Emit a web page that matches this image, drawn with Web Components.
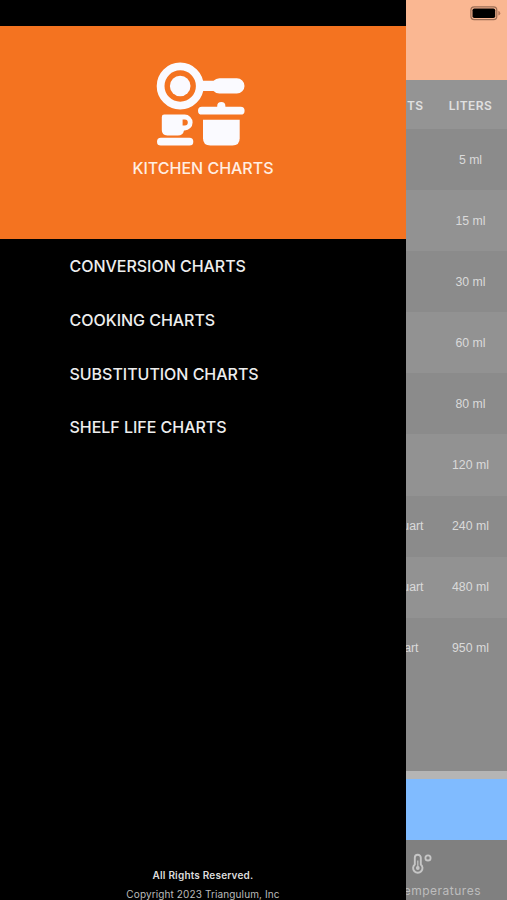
<!DOCTYPE html>
<html lang="en">
<head>
<meta charset="utf-8">
<title>Kitchen Charts</title>
<style>
html,body{margin:0;padding:0;background:#000}
</style>
</head>
<body>
<kitchen-app></kitchen-app>
<script>
const define = (name, html) => customElements.define(name, class extends HTMLElement {
  constructor() {
    super();
    this.attachShadow({ mode: 'open' }).innerHTML = html;
  }
});

define('kitchen-logo', `
<style>:host{display:block;width:90px;height:85px}svg{display:block}</style>
<svg width="90" height="85" viewBox="0 0 90 85" fill="#fafaff">
  <circle cx="24.2" cy="24" r="19.6" fill="none" stroke="#fafaff" stroke-width="7.8"/>
  <circle cx="24.2" cy="24" r="10.3"/>
  <path d="M46 18.700h11.500q2.500-2.500 6-2.500h17.300a7.700 7.700 0 0 1 0 15.400h-17.300q-3.500 0-6-2.500h-11.500z"/>
  <path d="M45.900 44.800h15.300v-.6a4.100 4.100 0 0 1 8.200 0v.6h15.300a3.900 3.900 0 0 1 0 7.800h-38.800a3.900 3.900 0 0 1 0-7.800z"/>
  <path d="M47 57.700h36.700v18.500q0 7.300-7.300 7.300h-22q-7.400 0-7.400-7.300z"/>
  <path fill-rule="evenodd" d="M8.200 52.600h20.500a7.900 7.900 0 0 1 0 15.800h-.7q-.9 5-6.200 5h-10.600q-5.400 0-5.400-5.400v-13q0-2.400 2.400-2.400zM26.600 57.500v6h2.200a3 3 0 0 0 0-6z"/>
  <rect x="1" y="75.800" width="36.300" height="7.700" rx="3.850"/>
</svg>`);

define('drawer-header', `
<style>
:host{display:flex;flex-direction:column;align-items:center;box-sizing:border-box;height:213.500px;margin-top:25.500px;padding-top:36px;background:#f47320}
kitchen-logo{margin-right:4.500px}
h1{margin:11.500px 0 0;font:500 16px/20px Inter,sans-serif;letter-spacing:-.01px;color:#ffeee2;white-space:nowrap}
</style>
<kitchen-logo></kitchen-logo><h1><slot></slot></h1>`);

define('menu-item', `
<style>:host{display:flex;align-items:center;height:53.700px;padding-left:69.500px;font:500 16px/20px Inter,sans-serif;letter-spacing:-.03px;color:#eee;white-space:nowrap}</style>
<slot></slot>`);

define('drawer-footer', `
<style>
:host{display:block;margin-top:auto;height:34px;text-align:center;font:400 10px/19px Inter,sans-serif;letter-spacing:.12px;color:#bbb;white-space:nowrap}
b{display:block;font-weight:600;letter-spacing:.2px;color:#ddd}
</style>
<b><slot name="rights"></slot></b><slot></slot>`);

define('side-drawer', `
<style>:host{display:flex;flex-direction:column;width:406px;flex:none;background:#000;overflow:hidden}</style>
<slot></slot>`);

define('battery-icon', `
<style>:host{display:block}svg{display:block}</style>
<svg width="31" height="15" viewBox="0 0 31 15">
  <rect x=".9" y=".9" width="25.900" height="12.700" rx="3.300" fill="none" stroke="#9b6d55" stroke-width="1.200"/>
  <rect x="2.500" y="2.400" width="22.700" height="9.700" rx="1.800"/>
  <path d="M28.300 4.800q2 .7 2 2.400t-2 2.400z" fill="#b57a60"/>
</svg>`);

define('status-area', `
<style>:host{display:flex;justify-content:flex-end;box-sizing:border-box;height:80px;padding:6px 6px 0 0;background:#fab792}</style>
<battery-icon></battery-icon>`);

define('chart-row', `
<style>
:host{display:grid;grid-template-columns:28px 1fr;align-items:center;height:61.100px;font:400 12.300px/16px "Liberation Sans",Arial,sans-serif;color:#dadada;background:#8b8b8b;white-space:nowrap}
:host([light]){background:#929292}
:host([head]){height:49px;padding-top:2px;box-sizing:border-box;font:600 12px/16px Inter,sans-serif;letter-spacing:.4px;color:#e0e0e0;background:#949494}
.q{display:flex;justify-content:flex-end;overflow:hidden;width:17.500px}
:host([short]) .q{width:12.500px}
.l{text-align:center}
</style>
<div class="q"><slot name="quart"></slot></div><div class="l"><slot></slot></div>`);

define('thermo-icon', `
<style>:host{display:block}svg{display:block}</style>
<svg width="22" height="22" viewBox="0 0 22 22" fill="none" stroke="#c6c6c6">
  <path d="M3.800 11.400V4.700a3 3 0 0 1 6 0v6.700a4.700 4.700 0 1 1-6 0z" stroke-width="1.900"/>
  <path d="M6.800 7.500v7" stroke-width="1.200"/>
  <circle cx="6.800" cy="15" r="1.900" fill="#c6c6c6" stroke="none"/>
  <circle cx="17" cy="4.900" r="2.600" stroke-width="1.800"/>
</svg>`);

define('tab-item', `
<style>
:host{display:block;box-sizing:border-box;height:60px;padding-top:12.500px;background:#808080;overflow:hidden}
thermo-icon{margin-left:5.300px}
div{display:flex;justify-content:flex-end;width:75px;overflow:hidden;margin-top:7.500px;font:400 12px/18px Inter,sans-serif;letter-spacing:.5px;color:#bdbdbd;white-space:nowrap}
</style>
<thermo-icon></thermo-icon><div><slot></slot></div>`);

define('chart-page', `
<style>
:host{display:flex;flex-direction:column;flex:1;min-width:0;overflow:hidden;background:#8b8b8b}
.gap{flex:1;background:#8b8b8b}
.line{height:8px;background:#b5b5b5}
.ad{height:61px;background:#80bbff}
</style>
<status-area></status-area>
<slot></slot>
<div class="gap"></div><div class="line"></div><div class="ad"></div>
<slot name="tab"></slot>`);

define('kitchen-app', `
<style>:host{display:flex;width:507px;height:900px;overflow:hidden}menu-item:first-of-type{margin-top:.5px}</style>
<side-drawer>
  <drawer-header>KITCHEN CHARTS</drawer-header>
  <menu-item>CONVERSION CHARTS</menu-item>
  <menu-item>COOKING CHARTS</menu-item>
  <menu-item>SUBSTITUTION CHARTS</menu-item>
  <menu-item>SHELF LIFE CHARTS</menu-item>
  <drawer-footer><span slot="rights">All Rights Reserved.</span>Copyright 2023 Triangulum, Inc</drawer-footer>
</side-drawer>
<chart-page>
  <chart-row head><span slot="quart">TS</span>LITERS</chart-row>
  <chart-row>5 ml</chart-row>
  <chart-row light>15 ml</chart-row>
  <chart-row>30 ml</chart-row>
  <chart-row light>60 ml</chart-row>
  <chart-row>80 ml</chart-row>
  <chart-row light>120 ml</chart-row>
  <chart-row><span slot="quart">uart</span>240 ml</chart-row>
  <chart-row light><span slot="quart">uart</span>480 ml</chart-row>
  <chart-row short><span slot="quart">art</span>950 ml</chart-row>
  <tab-item slot="tab">emperatures</tab-item>
</chart-page>`);
</script>
</body>
</html>
